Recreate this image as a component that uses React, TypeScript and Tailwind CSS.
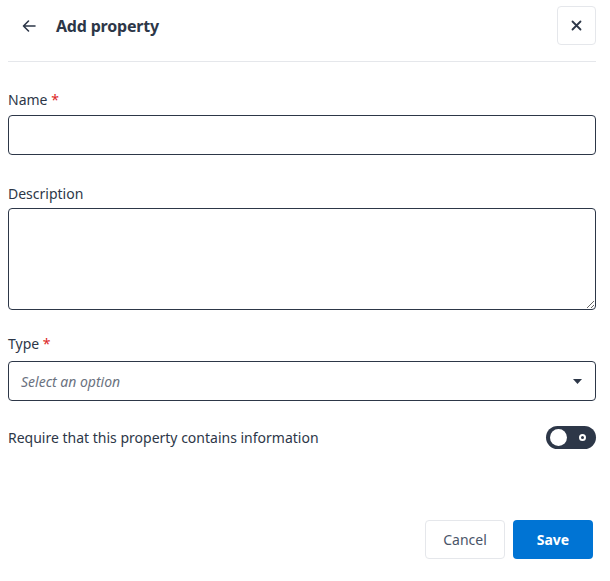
import React, { useState } from 'react';

const App: React.FC = () => {
  const [required, setRequired] = useState(false);

  return (
    <div className="w-[610px] h-[581px] bg-white pl-2 pr-[14px] text-[#2d3748]" style={{ fontFamily: '"Noto Sans", "Open Sans", sans-serif' }}>
      {/* Header */}
      <div className="flex items-start justify-between h-[62px] border-b border-[#e5e7eb] pt-[6px]">
        <div className="flex items-center h-[39px]">
          <button className="ml-[12px] w-[18px] h-[18px] flex items-center justify-center text-[#2d3748]">
            <svg width="16" height="16" viewBox="0 0 16 16" fill="none" stroke="currentColor" strokeWidth="1.6" strokeLinecap="round" strokeLinejoin="round">
              <path d="M14 8H2.5M7.5 3L2.5 8l5 5" />
            </svg>
          </button>
          <h1 className="ml-[18px] text-[16px] font-bold tracking-[-0.2px] text-[#2d3748]">Add property</h1>
        </div>
        <button className="w-[39px] h-[39px] flex items-center justify-center border border-[#e5e7eb] rounded-[4px] text-[#2d3748]">
          <svg width="11" height="11" viewBox="0 0 11 11" stroke="currentColor" strokeWidth="1.8" strokeLinecap="round">
            <path d="M1.5 1.5l8 8M9.5 1.5l-8 8" />
          </svg>
        </button>
      </div>

      {/* Form */}
      <div className="pt-[28px]">
        <label className="block text-[14px] leading-[20px] text-[#2d3748]">
          Name <span className="text-[#dc2626]">*</span>
        </label>
        <input className="mt-[5px] w-full h-[40px] border border-[#2d3748] rounded-[4px] px-3 text-[14px] outline-none" />

        <label className="block mt-[29px] text-[14px] leading-[20px]">Description</label>
        <textarea className="mt-[4px] block w-full h-[102px] border border-[#2d3748] rounded-[4px] px-3 py-2 text-[14px] outline-none" />

        <label className="block mt-[24px] text-[14px] leading-[20px]">
          Type <span className="text-[#dc2626]">*</span>
        </label>
        <div className="mt-[7px] w-full h-[40px] border border-[#2d3748] rounded-[4px] flex items-center justify-between pl-3 pr-[13px]">
          <span className="text-[14px] italic text-[#6b7280]">Select an option</span>
          <svg width="9" height="5" viewBox="0 0 9 5" fill="#2d3748">
            <path d="M0 0h9L4.5 5z" />
          </svg>
        </div>

        <div className="mt-[25px] flex items-center justify-between">
          <span className="text-[14px]">Require that this property contains information</span>
          <button
            onClick={() => setRequired(!required)}
            className="relative w-[50px] h-[23px] rounded-full bg-[#2d3748]"
          >
            <span className={`absolute top-[3px] ${required ? 'left-[30px]' : 'left-[4px]'} w-[17px] h-[17px] rounded-full bg-white`} />
            <span className="absolute top-[8px] right-[10px] w-[7px] h-[7px] rounded-full border-2 border-white" />
          </button>
        </div>
      </div>

      {/* Footer */}
      <div className="mt-[71px] flex justify-end gap-[8px] pr-[3px]">
        <button className="w-[80px] h-[39px] border border-[#e5e7eb] rounded-[4px] text-[14px] text-[#4a5568]">Cancel</button>
        <button className="w-[80px] h-[39px] rounded-[4px] bg-[#0074d4] text-white text-[14px] font-bold">Save</button>
      </div>
    </div>
  );
};

export default App;
